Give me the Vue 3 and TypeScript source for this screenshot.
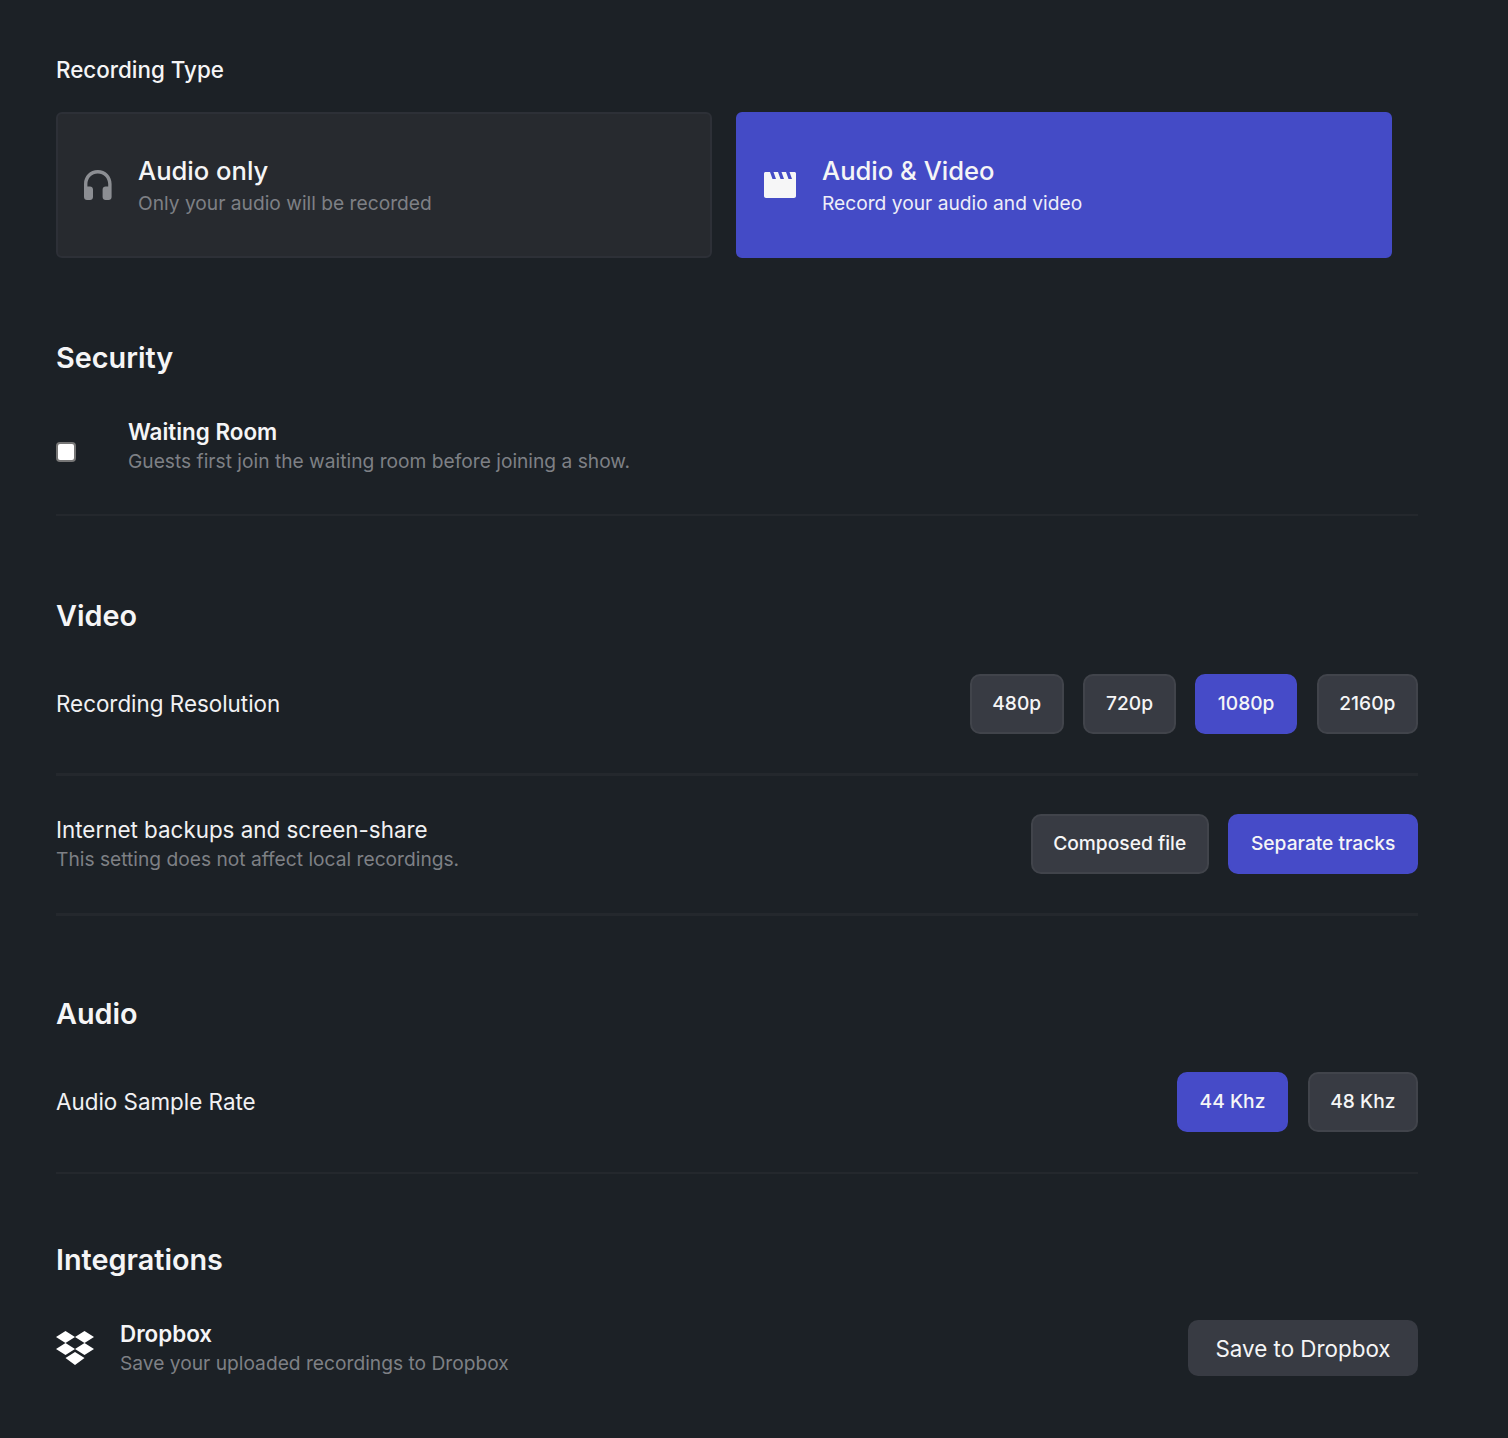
<script setup lang="ts">
import { ref } from 'vue'

const resolutions = ['480p', '720p', '1080p', '2160p']
const resolution = ref('1080p')
const rates = ['44 Khz', '48 Khz']
const rate = ref('44 Khz')
const tracks = ['Composed file', 'Separate tracks']
const track = ref('Separate tracks')
const type = ref<'audio' | 'video'>('video')
</script>

<template>
  <main class="page">
    <section class="rec">
      <h2 class="rec-title">Recording Type</h2>
      <div class="cards">
        <button class="card" :class="{ active: type === 'audio' }" @click="type = 'audio'">
          <svg class="card-icon head" width="28" height="30" viewBox="0 0 28 30" fill="currentColor">
            <path d="M13.800 0C6 0 0 6 0 14v13c0 1.700 1.300 3 3 3h3c1.700 0 3-1.300 3-3v-7.500c0-1.700-1.300-3-3-3H3.400V14C3.400 8 8 3.400 13.800 3.400S24.200 8 24.200 14v2.500h-2.600c-1.700 0-3 1.300-3 3V27c0 1.700 1.300 3 3 3h3c1.700 0 3-1.300 3-3V14C27.600 6 21.600 0 13.800 0z" />
          </svg>
          <span class="card-text">
            <span class="card-title">Audio only</span>
            <span class="card-sub">Only your audio will be recorded</span>
          </span>
        </button>
        <button class="card" :class="{ active: type === 'video' }" @click="type = 'video'">
          <svg class="card-icon clap" width="32" height="26" viewBox="0 0 32 26" fill="currentColor">
            <path d="M1.500 0H6l2.500 7H12L9.500 0H14l2.500 7H20L17.500 0H22l2.500 7H28L25.500 0h5c.8 0 1.500.7 1.500 1.500V24c0 1.100-.9 2-2 2H2c-1.100 0-2-.9-2-2V1.500C0 .7.7 0 1.500 0z" />
          </svg>
          <span class="card-text">
            <span class="card-title">Audio &amp; Video</span>
            <span class="card-sub">Record your audio and video</span>
          </span>
        </button>
      </div>
    </section>

    <section class="security">
      <h2 class="heading">Security</h2>
      <div class="waiting">
        <input class="check" type="checkbox" aria-label="Waiting Room" />
        <div>
          <div class="item-title">Waiting Room</div>
          <div class="item-sub">Guests first join the waiting room before joining a show.</div>
        </div>
      </div>
    </section>

    <section class="video">
      <h2 class="heading">Video</h2>
      <div class="row res-row">
        <div class="label">Recording Resolution</div>
        <div class="options">
          <button
            v-for="r in resolutions"
            :key="r"
            class="opt"
            :class="{ on: resolution === r }"
            @click="resolution = r"
          >{{ r }}</button>
        </div>
      </div>
      <div class="row backup-row">
        <div>
          <div class="label">Internet backups and screen-share</div>
          <div class="item-sub">This setting does not affect local recordings.</div>
        </div>
        <div class="options">
          <button
            v-for="t in tracks"
            :key="t"
            class="opt"
            :class="{ on: track === t }"
            @click="track = t"
          >{{ t }}</button>
        </div>
      </div>
    </section>

    <section class="audio">
      <h2 class="heading">Audio</h2>
      <div class="row rate-row">
        <div class="label">Audio Sample Rate</div>
        <div class="options">
          <button
            v-for="r in rates"
            :key="r"
            class="opt rate"
            :class="{ on: rate === r }"
            @click="rate = r"
          >{{ r }}</button>
        </div>
      </div>
    </section>

    <section class="integrations">
      <h2 class="heading">Integrations</h2>
      <div class="dropbox">
        <div class="dropbox-left">
          <svg class="dbx" width="38" height="34" viewBox="0 0 38 34" fill="currentColor">
            <path d="M9.500 0 0 6l9.500 6 9.500-6zM28.500 0 19 6l9.500 6L38 6zM0 18l9.500 6 9.500-6-9.500-6zM28.500 12 19 18l9.500 6 9.500-6zM19 21 9.500 27 19 34l9.500-7z" />
          </svg>
          <div>
            <div class="item-title">Dropbox</div>
            <div class="item-sub">Save your uploaded recordings to Dropbox</div>
          </div>
        </div>
        <button class="save">Save to Dropbox</button>
      </div>
    </section>
  </main>
</template>

<style scoped>
.page {
  box-sizing: border-box;
  width: 1508px;
  height: 1438px;
  padding: 56px 90px 0 56px;
  background: #1c2126;
  color: #f5f5f6;
  font-family: Inter, "Noto Sans", sans-serif;
  overflow: hidden;
}
h2 {
  margin: 0;
}
button {
  font-family: inherit;
  cursor: pointer;
}
.rec-title {
  font-size: 22.4px;
  line-height: 28px;
  font-weight: 500;
}
.cards {
  display: flex;
  gap: 24px;
  margin-top: 28px;
  margin-right: 26px;
}
.card {
  flex: 1;
  display: flex;
  align-items: center;
  height: 146px;
  box-sizing: border-box;
  padding: 0 26px;
  border: 2px solid #2d3037;
  border-radius: 6px;
  background: #272a2f;
  color: #f5f5f6;
  text-align: left;
}
.card.active {
  background: #444bc6;
  border-color: #444bc6;
}
.card-icon {
  flex: none;
  color: #8c8e93;
  overflow: visible;
}
.card.active .card-icon {
  color: #f6f6f7;
}
.card-text {
  display: flex;
  flex-direction: column;
  margin-left: 26px;
  padding-top: 2px;
}
.card-title {
  font-size: 25.6px;
  line-height: 32px;
  font-weight: 500;
}
.card-sub {
  margin-top: 2px;
  font-size: 19.2px;
  line-height: 28px;
  color: #7e8085;
}
.card.active .card-sub {
  color: #eeeef8;
}
.heading {
  font-size: 28.8px;
  line-height: 40px;
  font-weight: 600;
}
.security {
  margin-top: 80px;
}
.waiting {
  display: flex;
  align-items: center;
  gap: 52px;
  margin-top: 39px;
  padding-bottom: 39px;
  border-bottom: 2px solid #24282d;
}
.check {
  appearance: none;
  box-sizing: border-box;
  width: 20px;
  height: 20px;
  margin: 12px 0 0;
  background: #fff;
  border: 2px solid #767676;
  border-radius: 4px;
}
.item-title {
  font-size: 22.4px;
  line-height: 30px;
  font-weight: 600;
}
.item-sub {
  font-size: 19.2px;
  line-height: 28px;
  color: #7e8085;
}
.video {
  margin-top: 80px;
}
.row {
  display: flex;
  align-items: center;
  justify-content: space-between;
  border-bottom: 2px solid #24282d;
}
.res-row,
.backup-row {
  margin-top: 38px;
  padding-bottom: 39px;
  border-bottom-width: 3px;
}
.label {
  font-size: 22.4px;
  line-height: 30px;
  color: #f1f1f3;
}
.options {
  display: flex;
  gap: 19.6px;
}
.opt {
  height: 60px;
  box-sizing: border-box;
  padding: 0 20.6px 2px;
  border: 2px solid #41444b;
  border-radius: 10px;
  background: #383b43;
  color: #f5f5f6;
  font-size: 19.2px;
  font-weight: 500;
}
.opt.on {
  background: #464bc8;
  border-color: #464bc8;
}
.audio {
  margin-top: 78px;
}
.rate-row {
  margin-top: 38px;
  padding-bottom: 40px;
}
.integrations {
  margin-top: 66px;
}
.dropbox {
  display: flex;
  align-items: center;
  justify-content: space-between;
  margin-top: 39px;
}
.dropbox-left {
  display: flex;
  align-items: center;
  gap: 26px;
}
.dbx {
  color: #fff;
}
.save {
  width: 230px;
  height: 56px;
  border: 0;
  border-radius: 10px;
  background: #383b43;
  color: #f5f5f6;
  font-size: 22.4px;
}
</style>

<style>
html,
body {
  background: #1c2126;
}
</style>
